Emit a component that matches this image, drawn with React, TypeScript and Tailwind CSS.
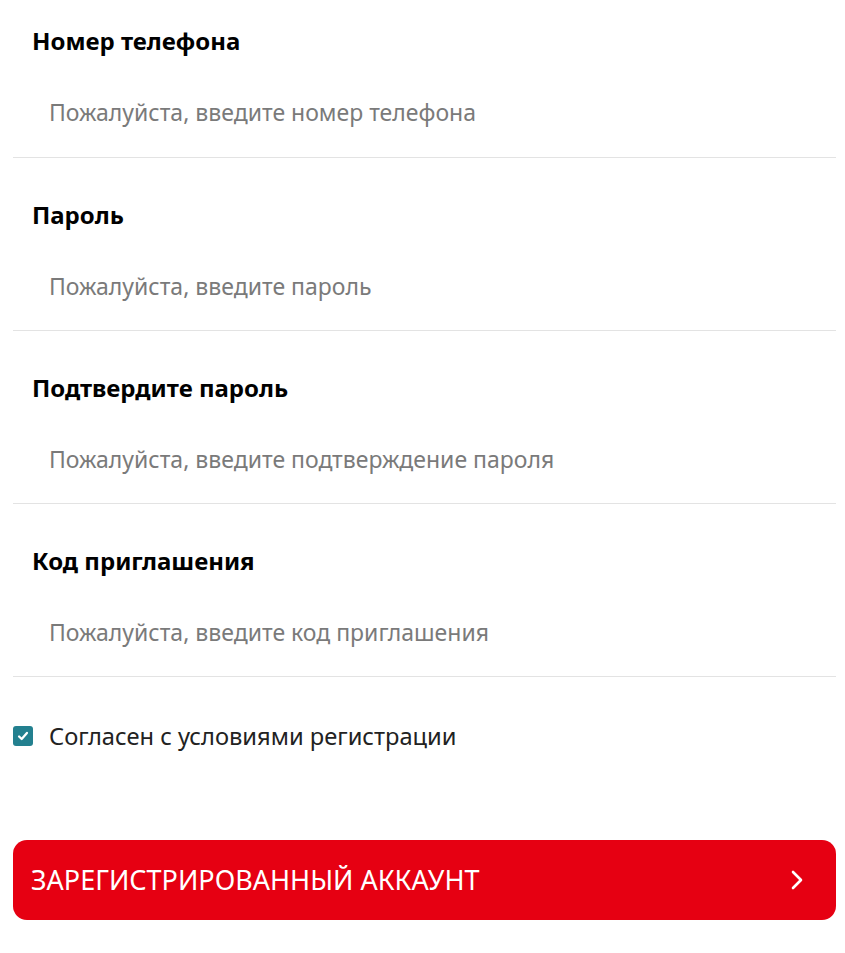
import React from 'react';

const FIELDS = [
  { label: 'Номер телефона', placeholder: 'Пожалуйста, введите номер телефона' },
  { label: 'Пароль', placeholder: 'Пожалуйста, введите пароль' },
  { label: 'Подтвердите пароль', placeholder: 'Пожалуйста, введите подтверждение пароля' },
  { label: 'Код приглашения', placeholder: 'Пожалуйста, введите код приглашения' },
];

export default function App() {
  return (
    <div className="min-h-screen bg-white pl-[13px] pr-[9px] font-['Noto_Sans',sans-serif]">
      {FIELDS.map((f, i) => (
        <div key={f.label} className={`border-b border-[#e3e3e3] ${i === 0 ? 'pt-[26px] pb-[20px]' : 'pt-[42px] pb-[19px]'}`}>
          <div className="pl-[19px] text-[24px] leading-[30px] font-bold text-black">{f.label}</div>
          <input
            type="text"
            placeholder={f.placeholder}
            className="mt-[31px] block h-[50px] w-full bg-transparent pl-[36px] text-[23px] text-black outline-none placeholder:text-[#7a7a7a]"
          />
        </div>
      ))}

      <label className="mt-[43px] flex items-center gap-[16px]">
        <span className="flex h-5 w-5 items-center justify-center rounded-[3px] bg-[#23808f]">
          <svg viewBox="0 0 16 16" className="h-[14px] w-[14px]" fill="none" stroke="white" strokeWidth="2.6" strokeLinecap="round" strokeLinejoin="round">
            <path d="M3.5 8.5l3 3 6-7" />
          </svg>
        </span>
        <span className="text-[23.7px] leading-[32px] text-[#222]">Согласен с условиями регистрации</span>
      </label>

      <button className="mt-[88px] flex h-[80px] w-full items-center justify-between rounded-[14px] bg-[#e60012] pl-[18px] pr-[33px] text-white">
        <span className="text-[27px]">ЗАРЕГИСТРИРОВАННЫЙ АККАУНТ</span>
        <svg viewBox="0 0 12 22" className="h-[22px] w-[12px]" fill="none" stroke="white" strokeWidth="2.6" strokeLinecap="round" strokeLinejoin="round">
          <path d="M2 3l8 8-8 8" />
        </svg>
      </button>
    </div>
  );
}
